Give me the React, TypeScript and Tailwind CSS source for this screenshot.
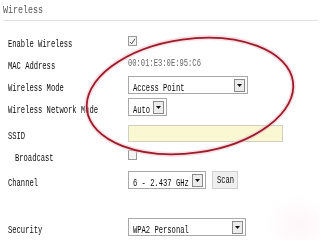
import React from "react";

const mono = { fontFamily: '"Liberation Mono", "DejaVu Sans Mono", monospace' };

function T({ children, cls = "text-[#0a0a0a]" }: { children: React.ReactNode; cls?: string }) {
  return (
    <span className={`inline-block whitespace-nowrap text-[11px] leading-[12px] origin-left scale-x-[0.65] ${cls}`} style={mono}>
      {children}
    </span>
  );
}

function Arrow() {
  return (
    <div className="w-[11px] h-[13px] mr-[2px] border border-[#8a8a8a] bg-[#ececec] flex items-center justify-center shrink-0">
      <svg width="5" height="3" viewBox="0 0 5 3">
        <path d="M0 0 L5 0 L2.5 3 Z" fill="#111" />
      </svg>
    </div>
  );
}

function Select({ w, text }: { w: string; text: string }) {
  return (
    <div className={`${w} h-[18px] border border-[#a8a8a8] bg-white flex items-center justify-between pl-[4px] overflow-hidden`}>
      <div className="w-0 flex-1"><T>{text}</T></div>
      <Arrow />
    </div>
  );
}

function Checkbox({ checked }: { checked?: boolean }) {
  return (
    <div className="w-[9px] h-[10px] border border-[#9a9a9a] bg-[#f4f4f4] flex items-center justify-center">
      {checked && (
        <svg width="7" height="7" viewBox="0 0 7 7">
          <path d="M1 4 L2.6 5.8 L6 0.8" stroke="#555" strokeWidth="1" fill="none" />
        </svg>
      )}
    </div>
  );
}

function Row({ label, children, cls = "", indent = false }: { label: string; children?: React.ReactNode; cls?: string; indent?: boolean }) {
  return (
    <div className={`h-[22px] flex items-center ${cls}`}>
      <div className={`w-[120px] shrink-0 ${indent ? "pl-[7px]" : ""}`}>
        <T>{label}</T>
      </div>
      {children}
    </div>
  );
}

export default function App() {
  return (
    <div className="relative w-[320px] h-[240px] bg-white overflow-hidden">
      <div className="ml-[3px] mr-[2px] h-[21px] flex items-center border-b border-[#e2e2e2]">
        <span className="inline-block text-[11px] leading-[12px] origin-left scale-x-[0.76] text-[#555]" style={mono}>Wireless</span>
      </div>
      <div className="pl-[8px] pt-[9px]">
        <Row label="Enable Wireless"><Checkbox checked /></Row>
        <Row label="MAC Address">
          <T cls="text-[#666]">00:01:E3:0E:95:C6</T>
        </Row>
        <Row label="Wireless Mode"><Select w="w-[120px]" text="Access Point" /></Row>
        <Row label="Wireless Network Mode"><Select w="w-[39px]" text="Auto" /></Row>
        <Row label="SSID" cls="mt-[4px]">
          <div className="w-[155px] h-[17px] border border-[#d0d0c0] bg-[#f9f8d2]" />
        </Row>
        <Row label="Broadcast" indent><Checkbox /></Row>
        <Row label="Channel" cls="mt-[3px]">
          <Select w="w-[78px]" text="6 - 2.437 GHz" />
          <div className="ml-[6px] w-[26px] h-[18px] border border-[#d0d0d0] bg-[#efefef] flex items-center pl-[4px]">
            <T>Scan</T>
          </div>
        </Row>
        <Row label="Security" cls="mt-[25px]"><Select w="w-[118px]" text="WPA2 Personal" /></Row>
      </div>
      <div className="absolute left-[276px] top-[206px] w-[44px] h-[38px] rounded-full bg-[#fdf0f4] blur-[7px] opacity-50" />
      <svg className="absolute left-0 top-0 pointer-events-none" width="320" height="240" viewBox="0 0 320 240">
        <ellipse cx="190" cy="96" rx="104" ry="57" transform="rotate(-8 190 96)" fill="none" stroke="#f2c9cf" strokeWidth="5" opacity="0.6" />
        <ellipse cx="190" cy="96" rx="104" ry="57" transform="rotate(-8 190 96)" fill="none" stroke="#9c1a2c" strokeWidth="1.8" />
      </svg>
    </div>
  );
}
